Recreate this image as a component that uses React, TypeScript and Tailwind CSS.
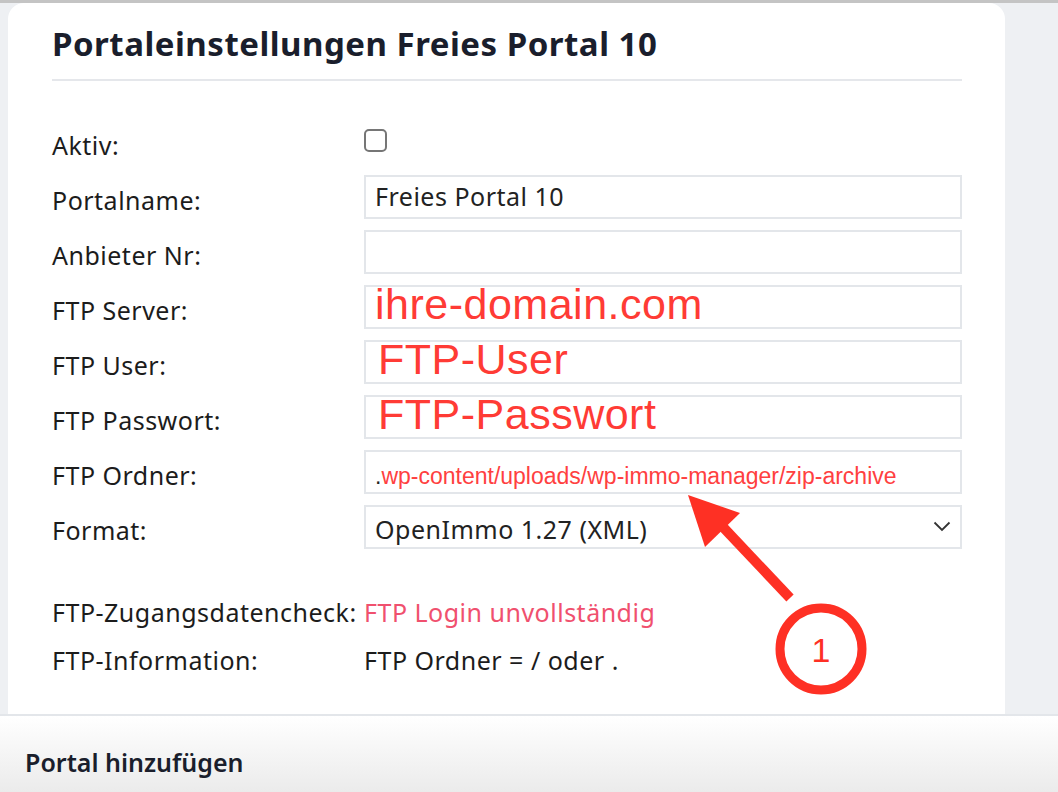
import React from 'react'

const RED = "font-['Liberation_Sans',Arial,sans-serif] text-[43px] leading-[40px] text-[#ff3b35] -mt-[6px]"

const ROWS: { label: string; value?: React.ReactNode }[] = [
  { label: 'Portalname:', value: <span className="text-[25px] tracking-[0.5px] text-[#222]">Freies Portal 10</span> },
  { label: 'Anbieter Nr:' },
  { label: 'FTP Server:', value: <span className={RED}>ihre-domain.com</span> },
  { label: 'FTP User:', value: <span className={`${RED} ml-[3px]`}>FTP-User</span> },
  { label: 'FTP Passwort:', value: <span className={`${RED} ml-[3px]`}>FTP-Passwort</span> },
  {
    label: 'FTP Ordner:',
    value: (
      <span className="font-['Liberation_Sans',Arial,sans-serif] text-[23px] leading-none pt-[8px] tracking-normal">
        <span className="text-[#222]">.</span>
        <span className="text-[#ff4040]">wp-content/uploads/wp-immo-manager/zip-archive</span>
      </span>
    ),
  },
]

function Field({ children }: { children?: React.ReactNode }) {
  return (
    <div className="w-[598px] h-[44px] border-2 border-[#e3e6ea] flex items-center pl-[9px]">
      {children}
    </div>
  )
}

export default function App() {
  return (
    <div className="relative w-[1058px] h-[792px] overflow-hidden bg-[#eef0f3] font-['Noto_Sans','Open_Sans',sans-serif] text-[#1c1c1c]">
      <div className="h-[3px] bg-[#c4c4c4]" />

      {/* Card */}
      <div className="ml-[8px] w-[997px] h-[711px] bg-white rounded-t-[16px] pl-[44px] pr-[43px]">
        <div className="pt-[18px] pb-[12px] border-b-2 border-[#e5e7eb]">
          <h1 className="text-[33px] leading-[46px] tracking-[0.5px] font-bold text-[#1a1e2c]">Portaleinstellungen Freies Portal 10</h1>
        </div>

        <div className="mt-[39px] flex flex-col gap-[11px] text-[25px] tracking-[0.5px]">
          <div className="flex h-[44px]">
            <div className="w-[312px] pt-[7px]">Aktiv:</div>
            <div className="pt-[9px]">
              <div className="w-[23px] h-[23px] rounded-[5px] border-2 border-[#767676]" />
            </div>
          </div>

          {ROWS.map(r => (
            <div key={r.label} className="flex items-center h-[44px]">
              <div className="w-[312px] pt-[8px]">{r.label}</div>
              <Field>{r.value}</Field>
            </div>
          ))}

          <div className="flex items-center h-[44px]">
            <div className="w-[312px] pt-[8px]">Format:</div>
            <div className="w-[598px] h-[44px] border-2 border-[#e3e6ea] flex items-center justify-between pl-[9px] pr-[9px] pt-[6px]">
              <span className="text-[#222]">OpenImmo 1.27 (XML)</span>
              <svg width="18" height="11" viewBox="0 0 18 11" className="-mt-[8px]">
                <path d="M1.5 1.5 L9 9 L16.5 1.5" fill="none" stroke="#333" strokeWidth="1.8" />
              </svg>
            </div>
          </div>
        </div>

        <div className="mt-[46px] flex flex-col gap-[14px] text-[25px] leading-[34px] tracking-[0.5px]">
          <div className="flex">
            <div className="w-[312px]">FTP-Zugangsdatencheck:</div>
            <div className="text-[#f0506e]">FTP Login unvollständig</div>
          </div>
          <div className="flex">
            <div className="w-[312px]">FTP-Information:</div>
            <div>FTP Ordner = / oder .</div>
          </div>
        </div>
      </div>

      {/* Next section */}
      <div className="border-t-2 border-[#e3e6ea] h-[78px] bg-gradient-to-b from-white to-[#ebebeb] pl-[25px] pt-[28px]">
        <h2 className="text-[25px] font-semibold text-[#1a1e2c]">Portal hinzufügen</h2>
      </div>

      {/* Annotation */}
      <svg className="absolute left-0 top-0 pointer-events-none" width="1058" height="792" viewBox="0 0 1058 792">
        <line x1="790" y1="598" x2="722" y2="526" stroke="#fe3024" strokeWidth="10" />
        <polygon points="688,495 740,513 705,547" fill="#fe3024" />
        <circle cx="821" cy="649" r="41" fill="none" stroke="#fe3024" strokeWidth="9" />
        <text x="821" y="662" textAnchor="middle" fontFamily="Liberation Sans, Arial, sans-serif" fontSize="34" fill="#fe3024">1</text>
      </svg>
    </div>
  )
}
